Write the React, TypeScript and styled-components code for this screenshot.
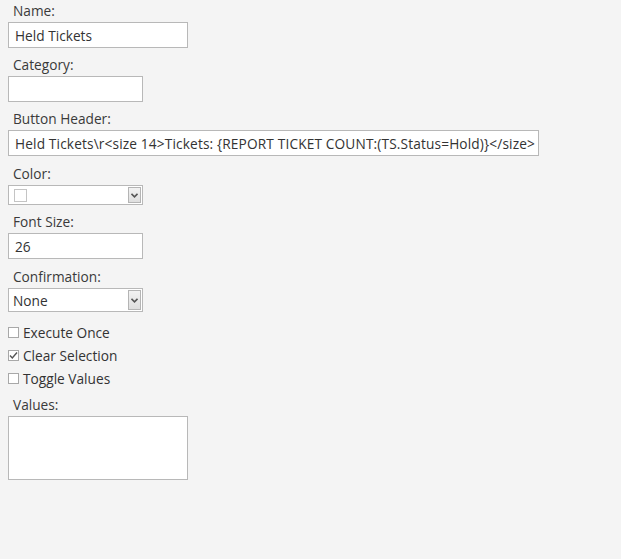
import { createGlobalStyle } from 'styled-components'
import styled from 'styled-components'

const GlobalStyle = createGlobalStyle`
  html, body {
    margin: 0;
    padding: 0;
    background: #f4f4f4;
  }
  body {
    font-family: "Open Sans", "Noto Sans", sans-serif;
    font-size: 13.7px;
    color: #333;
  }
`

const Form = styled.div`
  display: flex;
  flex-direction: column;
  align-items: flex-start;
  padding: 2px 8px 0 8px;
  min-height: 557px;
`

const Label = styled.div<{ $top?: number }>`
  height: 17px;
  line-height: 17px;
  padding-left: 5px;
  margin-top: ${({ $top }) => $top ?? 8}px;
  margin-bottom: 3px;
  color: #3a3a3a;
`

const TextBox = styled.div<{ $width: number }>`
  box-sizing: border-box;
  width: ${({ $width }) => $width}px;
  height: 26px;
  padding: 0 6px;
  display: flex;
  align-items: center;
  background: #fff;
  border: 1px solid #b8b8b8;
  color: #333;
  white-space: nowrap;
  overflow: hidden;
`

const LongText = styled.span`
  letter-spacing: 0.14px;
`

const TextArea = styled(TextBox)`
  height: 64px;
`

const Select = styled.div<{ $height: number }>`
  box-sizing: border-box;
  width: 135px;
  height: ${({ $height }) => $height}px;
  display: flex;
  align-items: center;
  background: #fff;
  border: 1px solid #b8b8b8;
  padding: 1px;
`

const SelectValue = styled.div`
  flex: 1;
  padding-left: 3px;
  display: flex;
  align-items: center;
  color: #333;
`

const Swatch = styled.div`
  width: 13px;
  height: 13px;
  box-sizing: border-box;
  border: 1px solid #c4c4c4;
  background: #fff;
  margin-left: 1px;
`

const DropButton = styled.div`
  box-sizing: border-box;
  width: 13px;
  align-self: stretch;
  display: flex;
  align-items: center;
  justify-content: center;
  border: 1px solid #b4b4b4;
  background: linear-gradient(#f2f2f2, #dedede);
`

const CheckList = styled.div`
  display: flex;
  flex-direction: column;
  padding-top: 9px;
`

const CheckRow = styled.div`
  height: 23px;
  display: flex;
  align-items: center;
  gap: 4px;
  color: #333;
`

const CheckBox = styled.div`
  box-sizing: border-box;
  width: 11px;
  height: 11px;
  border: 1px solid #a8a8a8;
  background: #fff;
  display: flex;
  align-items: center;
  justify-content: center;
`

function Chevron() {
  return (
    <svg width="7" height="5" viewBox="0 0 7 5">
      <path d="M0.5 0.8 L3.5 3.8 L6.5 0.8" fill="none" stroke="#555" strokeWidth="1.6" />
    </svg>
  )
}

function Check({ label, checked }: { label: string, checked?: boolean }) {
  return (
    <CheckRow>
      <CheckBox>
        {checked && (
          <svg width="9" height="9" viewBox="0 0 9 9">
            <path d="M1 4.5 L3.3 7 L8 1.5" fill="none" stroke="#555" strokeWidth="1.4" />
          </svg>
        )}
      </CheckBox>
      {label}
    </CheckRow>
  )
}

export default function App() {
  return (
    <>
      <GlobalStyle />
      <Form>
        <Label $top={0}>Name:</Label>
        <TextBox $width={180}>Held Tickets</TextBox>

        <Label>Category:</Label>
        <TextBox $width={135} />

        <Label>Button Header:</Label>
        <TextBox $width={531}>
          <LongText>
            {'Held Tickets\\r<size 14>Tickets: {REPORT TICKET COUNT:(TS.Status=Hold)}</size>'}
          </LongText>
        </TextBox>

        <Label $top={9}>Color:</Label>
        <Select $height={20}>
          <SelectValue><Swatch /></SelectValue>
          <DropButton><Chevron /></DropButton>
        </Select>

        <Label>Font Size:</Label>
        <TextBox $width={135}>26</TextBox>

        <Label $top={9}>Confirmation:</Label>
        <Select $height={24}>
          <SelectValue>None</SelectValue>
          <DropButton><Chevron /></DropButton>
        </Select>

        <CheckList>
          <Check label="Execute Once" />
          <Check label="Clear Selection" checked />
          <Check label="Toggle Values" />
        </CheckList>

        <Label $top={6}>Values:</Label>
        <TextArea $width={180} />
      </Form>
    </>
  )
}
